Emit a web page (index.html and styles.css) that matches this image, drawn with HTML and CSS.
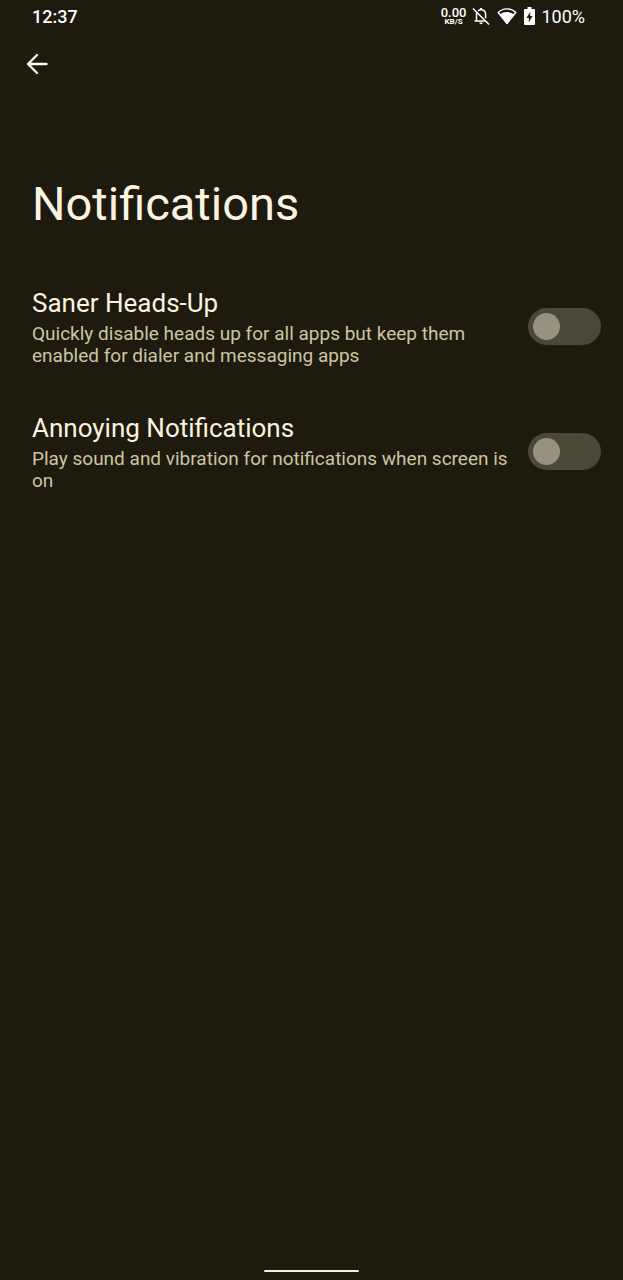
FILE: index.html
```html
<!DOCTYPE html>
<html lang="en">
<head>
<meta charset="utf-8">
<meta name="viewport" content="width=device-width, initial-scale=1">
<title>Notifications</title>
<link rel="stylesheet" href="styles.css">
</head>
<body>
<div class="screen">
  <div class="status-bar">
    <time class="clock">12:37</time>
    <div class="status-icons">
      <div class="net-speed"><span class="rate">0.00</span><span class="unit">KB/S</span></div>
      <svg class="bell" viewBox="0 0 18 18" width="18" height="18" fill="none" stroke="currentColor" stroke-width="1.5" aria-hidden="true">
        <path d="M1 1.5 17 17.5M6 3.8C7 3 8 2.800 9 2.800c2.800 0 4.600 2 4.600 4.800v3.600M4.500 6v7.500M2.500 14H13"/>
        <path d="M9 1v2" stroke-width="2"/>
        <path d="M7.300 15.500h3.400a1.700 1.700 0 0 1-3.400 0z" fill="currentColor" stroke="none"/>
      </svg>
      <svg class="wifi" viewBox="0 0 20 18" width="20" height="18" aria-hidden="true">
        <path d="M1.200 5.500C6 .6 14 .6 18.800 5.500L10 16.500z" fill="none" stroke="currentColor" stroke-width="1.400" stroke-linejoin="round"/>
        <path d="M3 7.200C7 4.400 13 4.400 17 7.200L10 16.500z" fill="currentColor"/>
      </svg>
      <svg class="battery" viewBox="0 0 11 18" width="11" height="18" aria-hidden="true">
        <path fill="currentColor" fill-rule="evenodd" d="M3.500 0h4v2H10q1 0 1 1v14q0 1-1 1H1q-1 0-1-1V3q0-1 1-1h2.500zM6.200 5 2.400 11h2.400v4.300L8.600 9H6.200z"/>
      </svg>
      <span class="percent">100%</span>
    </div>
  </div>
  <header class="app-bar">
    <button class="back" type="button" aria-label="Back">
      <svg viewBox="0 0 22 22" width="22" height="22" fill="none" stroke="currentColor" stroke-width="2.400" stroke-linecap="round" stroke-linejoin="round" aria-hidden="true"><path d="M20.500 11H2M11 2 2 11l9 9"/></svg>
    </button>
    <h1 class="title">Notifications</h1>
  </header>
  <main class="settings">
    <label class="setting">
      <span class="text">
        <span class="name">Saner Heads-Up</span>
        <span class="summary">Quickly disable heads up for all apps but keep them enabled for dialer and messaging apps</span>
      </span>
      <input class="switch" type="checkbox" role="switch">
    </label>
    <label class="setting">
      <span class="text">
        <span class="name">Annoying Notifications</span>
        <span class="summary">Play sound and vibration for notifications when screen is on</span>
      </span>
      <input class="switch" type="checkbox" role="switch">
    </label>
  </main>
  <div class="nav-bar"><div class="handle"></div></div>
</div>
</body>
</html>
```
FILE: styles.css
```css
* { box-sizing: border-box; }

body {
  margin: 0;
  background: #1e1a0d;
  color: #fbf3e0;
  font-family: Roboto, "Liberation Sans", sans-serif;
}

.screen {
  display: flex;
  flex-direction: column;
  min-height: 100vh;
}

.status-bar {
  display: flex;
  align-items: center;
  justify-content: space-between;
  height: 32px;
  padding: 0 38px 0 32px;
  color: #fff;
  font-size: 18px;
}

.clock { font-weight: 500; }

.status-icons {
  display: flex;
  align-items: center;
}

.net-speed {
  display: flex;
  flex-direction: column;
  align-items: center;
  margin-right: 6px;
}

.rate {
  font-size: 13px;
  font-weight: 500;
  line-height: 11px;
}

.unit {
  font-size: 8px;
  font-weight: 700;
  line-height: 8px;
}

.bell { margin-right: 7px; }
.wifi { margin-right: 7px; }
.battery { margin-right: 6px; }

.app-bar {
  padding: 16px 24px 0;
}

.back {
  display: flex;
  align-items: center;
  justify-content: center;
  width: 26px;
  height: 32px;
  padding: 0;
  border: 0;
  background: none;
  color: #fffaf0;
}

.title {
  margin: 96px 0 0 8px;
  font-size: 47px;
  font-weight: 400;
  line-height: 56px;
}

.settings {
  flex: 1;
  padding-top: 32px;
}

.setting {
  display: flex;
  align-items: center;
  gap: 16px;
  padding: 21px 22px 22px 32px;
}

.text {
  flex: 1;
  display: flex;
  flex-direction: column;
  gap: 2px;
}

.name {
  font-size: 26px;
  line-height: 36px;
}

.summary {
  color: #cdc5a4;
  font-size: 19px;
  line-height: 22px;
}

.switch {
  appearance: none;
  display: flex;
  align-items: center;
  flex: none;
  width: 73px;
  height: 37px;
  margin: 0;
  padding: 0 5px;
  border-radius: 19px;
  background: #4c4839;
}

.switch::before {
  content: "";
  width: 27px;
  height: 27px;
  border-radius: 50%;
  background: #97927f;
}

.switch:checked { justify-content: flex-end; }

.nav-bar {
  display: flex;
  justify-content: center;
  padding-bottom: 8px;
}

.handle {
  width: 95px;
  height: 2px;
  border-radius: 1px;
  background: #f5eee6;
}
```
